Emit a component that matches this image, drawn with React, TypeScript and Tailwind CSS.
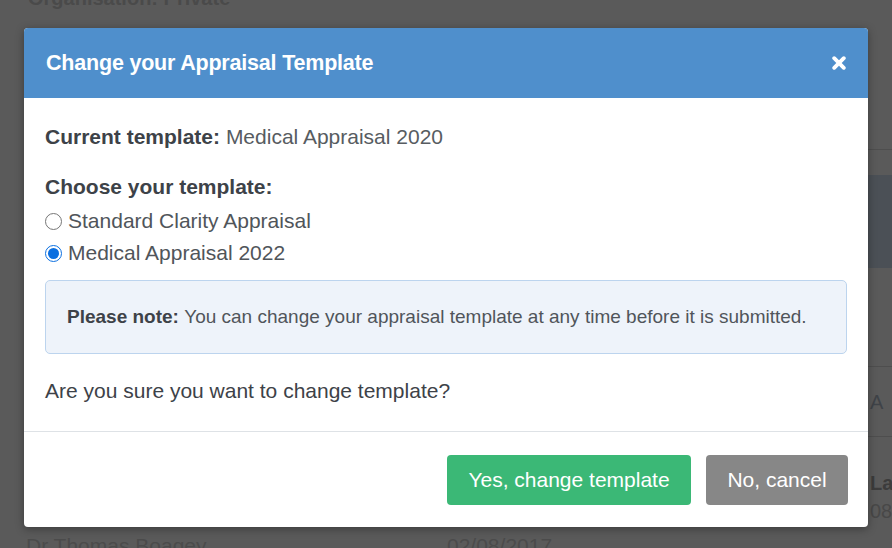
import { useState } from "react";

const font = { fontFamily: '"Liberation Sans", Arial, sans-serif' };

const templates = ["Standard Clarity Appraisal", "Medical Appraisal 2022"];

const App = () => {
  const [selected, setSelected] = useState(templates[1]);

  return (
    <div
      className="relative w-[892px] h-[548px] overflow-hidden bg-[#5a5a5a]"
      style={font}
    >
      {/* PAGE BEHIND THE OVERLAY */}
      <div className="absolute left-[28px] top-[-17px] text-[20px] font-bold text-[#4a4a4a]">
        Organisation: Private
      </div>
      <div className="absolute right-0 top-0 w-[24px] h-full flex flex-col">
        <div className="h-[150px] border-b border-[#4e4e4e]" />
        <div className="h-[25px]" />
        <div className="h-[93px] bg-[#4b5056]" />
        <div className="h-[99px] border-b border-[#4e4e4e]" />
        <div className="h-[70px] border-b border-[#4e4e4e] flex items-center pl-[2px] text-[20px] text-[#3f4348]">
          A
        </div>
        <div className="pt-[36px] pl-[2px] text-[20px] font-bold text-[#3c3c3c] leading-none">
          La
        </div>
        <div className="pt-[8px] pl-[2px] text-[20px] text-[#484848] leading-none">
          08
        </div>
      </div>
      <div className="absolute left-[26px] top-[530px] text-[21px] text-[#4b4b4b]">
        Dr Thomas Boagey
      </div>
      <div className="absolute left-[447px] top-[530px] text-[21px] text-[#4b4b4b]">
        02/08/2017
      </div>

      {/* MODAL */}
      <div className="absolute left-[24px] top-[28px] w-[844px] h-[499px] bg-white rounded-[4px] overflow-hidden shadow-[0_2px_8px_rgba(0,0,0,0.35)] flex flex-col">
        {/* HEADER */}
        <div className="h-[70px] bg-[#4f8fcc] flex items-center justify-between pl-[22px] pr-[22px]">
          <h2 className="text-[21.5px] font-bold text-white tracking-[-0.2px]">
            Change your Appraisal Template
          </h2>
          <svg width="14" height="14" viewBox="0 0 14 14">
            <path
              d="M2.2 2.2 L11.8 11.8 M11.8 2.2 L2.2 11.8"
              stroke="white"
              strokeWidth="3.8"
              strokeLinecap="round"
            />
          </svg>
        </div>

        {/* BODY */}
        <div className="px-[21px] pt-[26px] text-[21px] text-[#3d4248] flex flex-col">
          <p className="leading-[26px]">
            <span className="font-bold">Current template:</span>{" "}
            <span className="text-[#575c61]">Medical Appraisal 2020</span>
          </p>
          <p className="mt-[24px] leading-[26px] font-bold">
            Choose your template:
          </p>
          <div className="mt-[5px] flex flex-col">
            {templates.map((t) => (
              <label
                key={t}
                className="flex items-center gap-[6px] h-[32px] text-[#50555a] cursor-pointer"
                onClick={() => setSelected(t)}
              >
                <span
                  className={`w-[17px] h-[17px] rounded-full flex items-center justify-center ${
                    selected === t
                      ? "border border-[#0b6fe0]"
                      : "border border-[#767676]"
                  }`}
                >
                  {selected === t && (
                    <span className="w-[11px] h-[11px] rounded-full bg-[#0b6fe0]" />
                  )}
                </span>
                {t}
              </label>
            ))}
          </div>

          {/* NOTE */}
          <div className="mt-[11px] h-[74px] rounded-[5px] border border-[#bcd4ee] bg-[#eef3fa] flex items-center pl-[21px] text-[19px] text-[#50555a]">
            <span className="font-bold text-[#3d4248]">Please note:</span>
            &nbsp;You can change your appraisal template at any time before it
            is submitted.
          </div>

          <p className="mt-[24px] leading-[26px] text-[#3d4248]">
            Are you sure you want to change template?
          </p>
        </div>

        {/* FOOTER */}
        <div className="mt-auto border-t border-[#dee2e6] h-[96px] flex items-start justify-end gap-[15px] pt-[23px] pr-[20px]">
          <button className="h-[50px] w-[244px] rounded-[4px] bg-[#3bb876] text-white text-[21px]">
            Yes, change template
          </button>
          <button className="h-[50px] w-[142px] rounded-[4px] bg-[#878787] text-white text-[21px]">
            No, cancel
          </button>
        </div>
      </div>
    </div>
  );
};

export default App;
